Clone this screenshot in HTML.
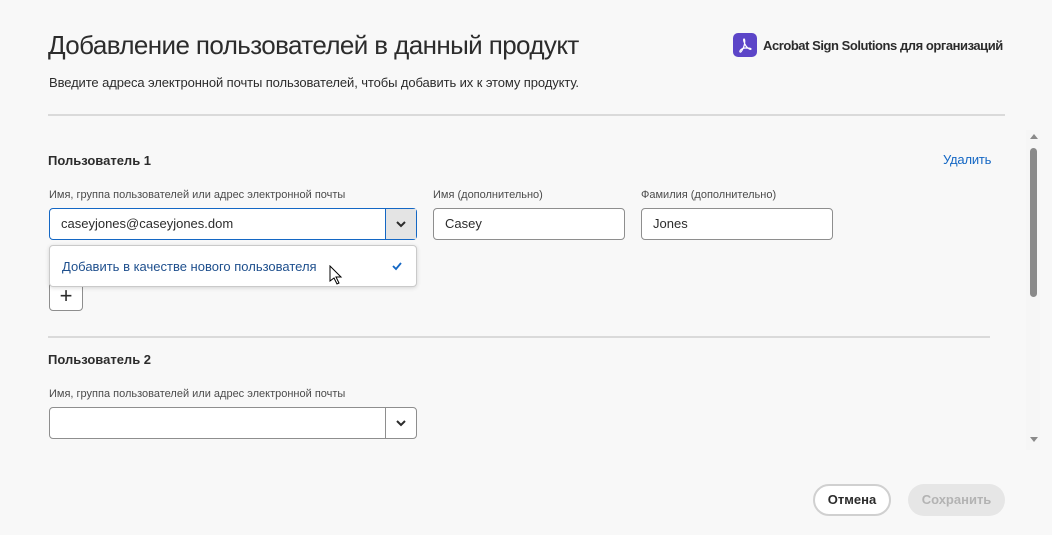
<!DOCTYPE html>
<html><head><meta charset="utf-8"><style>
*{box-sizing:border-box;margin:0;padding:0}
body{width:1052px;height:535px;background:#f8f8f8;font-family:"Liberation Sans","DejaVu Sans",sans-serif;color:#2c2c2c;position:relative;overflow:hidden}
.a{position:absolute}
h1{position:absolute;left:48px;top:30px;font-size:26px;font-weight:normal;color:#2c2c2c;letter-spacing:-0.6px}
.sub{left:49px;top:75px;font-size:13px;color:#2c2c2c;letter-spacing:-0.1px}
.hr{height:2px;background:#dadada}
.lbl{font-size:11px;color:#4b4b4b}
.b{font-weight:bold;font-size:13px;color:#2c2c2c}
.in{border:1px solid #8e8e8e;border-radius:4px;background:#fff;height:32px;font-size:13px;padding:7px 11px;color:#2c2c2c}
.btn{border-left:1px solid #8e8e8e;width:31px;height:100%;position:absolute;right:0;top:0;display:flex;align-items:center;justify-content:center}
</style></head><body>
<h1>Добавление пользователей в данный продукт</h1>
<div class="a" style="left:733px;top:33px;width:24px;height:24px;border-radius:5px;background:#5c45c8">
<svg width="24" height="24" viewBox="0 0 24 24"><path d="M11 6c-1 0 0 4 2 7s5 4 5 3-3-1-6-1-6 3-5 4 3-3 4-6 1-7 0-7z" fill="none" stroke="#fff" stroke-width="1.2"/></svg></div>
<div class="a" style="left:763px;top:38px;font-size:13px;font-weight:bold;color:#2c2c2c;letter-spacing:-0.45px">Acrobat Sign Solutions для организаций</div>
<div class="a sub">Введите адреса электронной почты пользователей, чтобы добавить их к этому продукту.</div>
<div class="a hr" style="left:48px;top:114px;width:957px"></div>
<div class="a b" style="left:48px;top:153px">Пользователь 1</div>
<div class="a" style="left:943px;top:152px;font-size:13px;color:#1467c4;letter-spacing:-0.2px">Удалить</div>
<div class="a lbl" style="left:49px;top:189px">Имя, группа пользователей или адрес электронной почты</div>
<div class="a lbl" style="left:433px;top:189px">Имя (дополнительно)</div>
<div class="a lbl" style="left:641px;top:189px">Фамилия (дополнительно)</div>
<div class="a in" style="left:49px;top:208px;width:368px;border-color:#1467c4">caseyjones@caseyjones.dom<div class="btn" style="background:#e4e4e4;border-color:#1467c4"><svg width="12" height="8"><path d="M2 2l4 4 4-4" stroke="#2c2c2c" stroke-width="2" fill="none"/></svg></div></div>
<div class="a in" style="left:433px;top:208px;width:192px">Casey</div>
<div class="a in" style="left:641px;top:208px;width:192px">Jones</div>
<div class="a" style="left:49px;top:282px;width:34px;height:29px;border:1px solid #8e8e8e;border-radius:4px;background:#fff;font-size:22px;text-align:center;line-height:26px">+</div>
<div class="a" style="left:49px;top:245px;width:368px;height:42px;background:#fff;border:1px solid #cacaca;border-radius:4px;box-shadow:0 1px 4px rgba(0,0,0,.15)">
<div class="a" style="left:12px;top:13px;font-size:13px;color:#1e4f8d">Добавить в качестве нового пользователя</div>
<svg class="a" style="left:341px;top:14px" width="12" height="12"><path d="M2 6l3 3 5-6" stroke="#1467c4" stroke-width="1.8" fill="none"/></svg>
<svg class="a" style="left:279px;top:19px" width="14" height="20"><path d="M1 1v15l4-3 3 6 2-1-3-6h5z" fill="#fff" stroke="#000" stroke-width="1"/></svg>
</div>
<div class="a hr" style="left:48px;top:336px;width:942px"></div>
<div class="a b" style="left:48px;top:352px">Пользователь 2</div>
<div class="a lbl" style="left:49px;top:388px">Имя, группа пользователей или адрес электронной почты</div>
<div class="a in" style="left:49px;top:407px;width:368px"><div class="btn"><svg width="12" height="8"><path d="M2 2l4 4 4-4" stroke="#2c2c2c" stroke-width="2" fill="none"/></svg></div></div>
<div class="a" style="left:1026px;top:130px;width:14px;height:320px;background:#f6f6f6"></div>
<div class="a" style="left:1030px;top:134px;width:0;height:0;border:4px solid transparent;border-bottom:5px solid #8a8a8a;border-top:0"></div>
<div class="a" style="left:1030px;top:148px;width:7px;height:149px;border-radius:4px;background:#8a8a8a"></div>
<div class="a" style="left:1030px;top:437px;width:0;height:0;border:4px solid transparent;border-top:5px solid #8a8a8a;border-bottom:0"></div>
<div class="a" style="left:813px;top:484px;width:78px;height:32px;border:2px solid #d0d0d0;border-radius:16px;background:#fff;font-size:13px;font-weight:bold;text-align:center;line-height:28px">Отмена</div>
<div class="a" style="left:908px;top:484px;width:97px;height:32px;border-radius:16px;background:#e6e6e6;color:#b3b3b3;font-size:13px;font-weight:bold;text-align:center;line-height:32px">Сохранить</div>
</body></html>
